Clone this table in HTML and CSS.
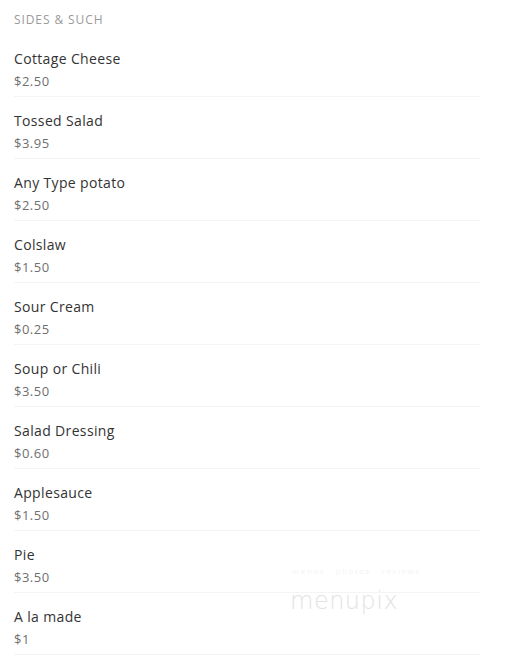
FILE: index.html
```html
<!DOCTYPE html>
<html>
<head>
<meta charset="utf-8">
<link rel="stylesheet" href="styles.css">
</head>
<body>
<div class="menu">
  <div class="section-title">SIDES &amp; SUCH</div>
  <div class="item"><div class="name">Cottage Cheese</div><div class="price">$2.50</div></div>
  <div class="item"><div class="name">Tossed Salad</div><div class="price">$3.95</div></div>
  <div class="item"><div class="name">Any Type potato</div><div class="price">$2.50</div></div>
  <div class="item"><div class="name">Colslaw</div><div class="price">$1.50</div></div>
  <div class="item"><div class="name">Sour Cream</div><div class="price">$0.25</div></div>
  <div class="item"><div class="name">Soup or Chili</div><div class="price">$3.50</div></div>
  <div class="item"><div class="name">Salad Dressing</div><div class="price">$0.60</div></div>
  <div class="item"><div class="name">Applesauce</div><div class="price">$1.50</div></div>
  <div class="item"><div class="name">Pie</div><div class="price">$3.50</div></div>
  <div class="item"><div class="name">A la made</div><div class="price">$1</div></div>
</div>
<div class="watermark">
  <div class="wm-small">menus &middot; photos &middot; reviews</div>
  <div class="wm-big">menupix</div>
</div>
</body>
</html>
```
FILE: styles.css
```css
html, body {
  margin: 0;
  padding: 0;
  background: #fff;
}
body {
  font-family: "Open Sans", "Liberation Sans", sans-serif;
  color: #333;
  position: relative;
  height: 667px;
  overflow: hidden;
}
.menu {
  padding: 12px 25px 0 14px;
}
.section-title {
  font-size: 12px;
  line-height: 16px;
  color: #9a9a9a;
  letter-spacing: 0.9px;
  margin-bottom: 7px;
}
.item {
  padding: 14px 0 5px;
  border-bottom: 1px solid #f4f4f4;
}
.name {
  font-size: 14px;
  line-height: 20px;
  color: #333;
  letter-spacing: 0.35px;
}
.price {
  font-size: 13px;
  line-height: 20px;
  color: #6f6f6f;
  letter-spacing: 0.5px;
  margin-top: 2px;
}
.watermark {
  position: absolute;
  left: 290px;
  top: 566px;
}
.wm-small {
  font-size: 8px;
  line-height: 10px;
  letter-spacing: 1.5px;
  color: #f3f3f3;
  padding-left: 2px;
}
.wm-big {
  font-family: "DejaVu Sans", sans-serif;
  font-weight: 200;
  font-size: 24px;
  line-height: 30px;
  letter-spacing: 0.5px;
  color: #e3e3e3;
  margin-top: 10px;
}
```
